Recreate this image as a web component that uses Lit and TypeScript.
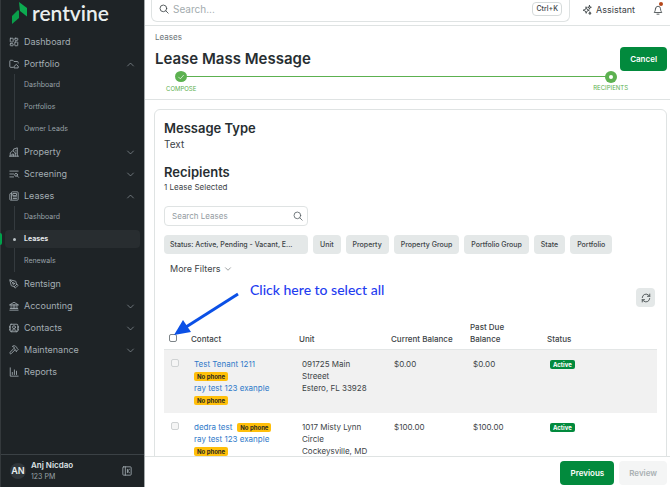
import { LitElement, html, svg, css, nothing } from "lit";
import { customElement, property } from "lit/decorators.js";
import { classMap } from "lit/directives/class-map.js";

const icons = {
  dashboard: svg`<rect x="3" y="3" width="7" height="9" rx="1"/><rect x="14" y="3" width="7" height="5" rx="1"/><rect x="14" y="12" width="7" height="9" rx="1"/><rect x="3" y="16" width="7" height="5" rx="1"/>`,
  folder: svg`<path d="M10 20H4a2 2 0 0 1-2-2V5a2 2 0 0 1 2-2h5l3 3h8a2 2 0 0 1 2 2v2"/><path d="M13 17l4.500-4 4.500 4v4.500h-9z"/>`,
  property: svg`<path d="M1 22h22M3 22v-8l6-5 6 5v8M7 22v-5h4v5M11 8V5l9-3v20M16 8h1M16 12h1M16 16h1"/>`,
  screening: svg`<path d="M2 5h20M2 12h9M2 19h9"/><circle cx="17" cy="14" r="3.500"/><path d="M19.500 16.500L23 20"/>`,
  leases: svg`<path d="M6 6V4a2 2 0 0 1 2-2h12a2 2 0 0 1 2 2v16a2 2 0 0 1-2 2H4a2 2 0 0 1-2-2V8a2 2 0 0 1 2-2h2v14"/><rect x="10" y="6" width="8" height="5"/><path d="M10 14h8M10 18h8"/>`,
  pen: svg`<path d="M15.700 21.300a1 1 0 0 1-1.400 0l-1.600-1.600a1 1 0 0 1 0-1.400l5.600-5.600a1 1 0 0 1 1.400 0l1.600 1.600a1 1 0 0 1 0 1.400z"/><path d="M18 13l-1.400-6.900a1 1 0 0 0-.7-.7L3.200 2a1 1 0 0 0-1.200 1.200l3.500 12.700a1 1 0 0 0 .7.7L13 18M2.300 2.300l7.300 7.300"/><circle cx="11" cy="11" r="2"/>`,
  bank: svg`<path d="M2 9l10-6 10 6zM5 9v9M10 9v9M14 9v9M19 9v9M3 18h18M2 22h20"/>`,
  contacts: svg`<rect x="3" y="3" width="18" height="18" rx="2"/><circle cx="12" cy="10" r="3.500"/><path d="M6.500 21v-1.500a3 3 0 0 1 3-3h5a3 3 0 0 1 3 3V21M1.500 8v3M1.500 14v3M22.500 8v3M22.500 14v3"/>`,
  hammer: svg`<path d="M14 12l-8.500 8.500a2.100 2.100 0 0 1-3-3L11 9M17.600 15L22 10.600l-2.500-2.500V6.500L15.500 3C13 1 9.500 1.500 8 3.500l5 2.500v2.500L17.600 15z"/>`,
  chart: svg`<path d="M3 2v20h19M8 18v-5M13 18V7M18 18v-8"/>`,
  down: svg`<path d="M2 7l10 10L22 7"/>`,
  up: svg`<path d="M2 17L12 7l10 10"/>`,
  search: svg`<circle cx="10.500" cy="10.500" r="8"/><path d="M16.500 16.500L22 22"/>`,
  panel: svg`<rect x="2" y="2" width="20" height="20" rx="2"/><path d="M8 2v20M18 8l-5 4 5 4M13 8v8"/>`,
  sparkle: svg`<path d="M10 5l2 5.500 5.500 2-5.500 2L10 20l-2-5.500-5.500-2 5.500-2zM18 1l1 3.500 3.500 1-3.500 1L18 10l-1-3.500-3.500-1 3.500-1zM19 17l.7 2.300 2.300.7-2.300.7L19 23l-.7-2.300L16 20l2.300-.7z"/>`,
  bell: svg`<path d="M6 9a6 6 0 0 1 12 0c0 6 3 7.500 3 9H3c0-1.500 3-3 3-9M9.500 22h5"/>`,
  check: svg`<path d="M5 12.500l5 5L19.500 7"/>`,
  refresh: svg`<path d="M3 11a9 9 0 0 1 15.500-5.500L21 8M21 2.500V8h-5.500M21 13a9 9 0 0 1-15.500 5.500L3 16M3 21.500V16h5.500"/>`,
};
type IconName = keyof typeof icons;

@customElement("rv-icon")
class RvIcon extends LitElement {
  @property() name: IconName = "search";
  static styles = css`
    :host { display: inline-flex; width: 10px; height: 10px; flex: none; }
    .glyph { width: 100%; height: 100%; fill: none; stroke: currentColor; stroke-width: 2; stroke-linecap: round; stroke-linejoin: round; overflow: visible; }
  `;
  render() {
    return html`<svg class="glyph" viewBox="0 0 24 24" aria-hidden="true">${icons[this.name]}</svg>`;
  }
}

interface NavItem { label: string; icon: IconName; expandable?: boolean; children?: string[]; }

const NAV: NavItem[] = [
  { label: "Dashboard", icon: "dashboard" },
  { label: "Portfolio", icon: "folder", expandable: true, children: ["Dashboard", "Portfolios", "Owner Leads"] },
  { label: "Property", icon: "property", expandable: true },
  { label: "Screening", icon: "screening", expandable: true },
  { label: "Leases", icon: "leases", expandable: true, children: ["Dashboard", "Leases", "Renewals"] },
  { label: "Rentsign", icon: "pen" },
  { label: "Accounting", icon: "bank", expandable: true },
  { label: "Contacts", icon: "contacts", expandable: true },
  { label: "Maintenance", icon: "hammer", expandable: true },
  { label: "Reports", icon: "chart" },
];

@customElement("rv-sidebar")
class RvSidebar extends LitElement {
  static styles = css`
    :host { display: flex; flex-direction: column; box-sizing: border-box; background: #1e2326; color: #a3adb3; border-left: 1px solid #34393c; }
    a, button { font: inherit; color: inherit; text-decoration: none; background: none; border: 0; padding: 0; text-align: left; }
    .brand { display: flex; align-items: center; gap: 5px; height: 25px; padding-left: 10px; color: #e9eeee; font: 600 21px/25px Lato, sans-serif; }
    .mark { width: 16px; height: 24px; flex: none; }
    .nav { flex: 1; padding-top: 6px; }
    .list { list-style: none; margin: 0; padding: 0; }
    .row { display: flex; align-items: center; box-sizing: border-box; width: 100%; height: 22px; padding: 0 10px 0 8px; gap: 5px; font-size: 9px; }
    .label { flex: 1; }
    .chevron { width: 7px; height: 7px; }
    .sub { position: relative; margin: -1px 0 1px; }
    .sub::before { content: ""; position: absolute; left: 13px; top: 0; bottom: 0; width: 1px; background: #343a3e; }
    .leaf { position: relative; display: flex; align-items: center; height: 22px; padding-left: 23px; font-size: 7px; color: #98a2a8; }
    .current { color: #e3e8ea; font-weight: 700; }
    .current::before { content: ""; position: absolute; inset: 2px 4px; border-radius: 4px; background: #282d30; }
    .current::after { content: ""; position: absolute; left: -1px; top: 5px; width: 2px; height: 12px; border-radius: 0 2px 2px 0; background: #00a14b; }
    .dot { position: absolute; z-index: 1; left: 12px; top: 10px; width: 3px; height: 3px; border-radius: 50%; background: #b9c1c5; }
    .text { position: relative; }
    .user { display: flex; align-items: center; gap: 5px; border-top: 1px solid #3b4145; height: 32px; padding: 0 12px 0 9px; }
    .avatar { display: grid; place-items: center; width: 16px; height: 16px; border-radius: 50%; background: #30363a; color: #e9eeee; font-size: 9px; font-weight: 600; }
    .who { flex: 1; font-size: 8px; line-height: 11px; font-weight: 600; color: #dfe4e6; }
    .org { display: block; font-size: 7px; font-weight: 400; color: #9aa4a9; }
    .collapse { display: flex; }
  `;
  render() {
    return html`
      <div class="brand">
        <svg class="mark" viewBox="0 0 16 24" aria-hidden="true">
          <path fill="#0cab50" d="M8 1l8 6v8.500l-7-5.500z" /><path fill="#0a9e4a" d="M1 15l6-6 1 1v7l-7 6z" />
        </svg>rentvine
      </div>
      <nav class="nav" aria-label="Main"><ul class="list">
        ${NAV.map((item) => html`<li>
          ${item.expandable
            ? html`<button class="row" aria-expanded=${item.children ? "true" : "false"}><rv-icon name=${item.icon}></rv-icon><span class="label">${item.label}</span><rv-icon class="chevron" name=${item.children ? "up" : "down"}></rv-icon></button>`
            : html`<a class="row" href="#"><rv-icon name=${item.icon}></rv-icon><span class="label">${item.label}</span></a>`}
          ${item.children ? html`<ul class="list sub">${item.children.map((child) => {
            const current = child === item.label;
            return html`<li><a href="#" class=${classMap({ leaf: true, current })} aria-current=${current ? "page" : nothing}>${current ? html`<span class="dot"></span>` : nothing}<span class="text">${child}</span></a></li>`;
          })}</ul>` : nothing}
        </li>`)}
      </ul></nav>
      <div class="user">
        <span class="avatar">AN</span>
        <span class="who">Anj Nicdao<span class="org">123 PM</span></span>
        <button class="collapse" aria-label="Collapse sidebar"><rv-icon name="panel"></rv-icon></button>
      </div>`;
  }
}

interface Contact { name: string; inline?: boolean; }
interface Lease { contacts: Contact[]; address: string[]; current: string; pastDue: string; status: string; }

const FILTERS = ["Unit", "Property", "Property Group", "Portfolio Group", "State", "Portfolio"];
const LEASES: Lease[] = [
  { contacts: [{ name: "Test Tenant 1211" }, { name: "ray test 123 exanple" }], address: ["091725 Main", "Streeet", "Estero, FL 33928"], current: "$0.00", pastDue: "$0.00", status: "Active" },
  { contacts: [{ name: "dedra test", inline: true }, { name: "ray test 123 exanple" }], address: ["1017 Misty Lynn", "Circle", "Cockeysville, MD"], current: "$100.00", pastDue: "$100.00", status: "Active" },
];

@customElement("rv-recipients")
class RvRecipients extends LitElement {
  static styles = css`
    :host { display: block; position: relative; box-sizing: border-box; border: 1px solid #dfe3e3; border-radius: 6px; padding: 9px; color: #3c4346; font-size: 8px; }
    h2 { margin: 0; font-size: 13px; line-height: 18px; font-weight: 600; color: #272e31; }
    p { margin: 0; }
    button, input { font: inherit; color: inherit; }
    .type { font-size: 10px; line-height: 14px; margin-bottom: 12px; }
    .count { line-height: 12px; margin-bottom: 13px; }
    .search { display: flex; align-items: center; box-sizing: border-box; width: 144px; height: 20px; padding: 0 4px 0 7px; border: 1px solid #dfe3e3; border-radius: 4px; color: #596266; }
    .field { flex: 1; min-width: 0; border: 0; padding: 0; outline: 0; background: none; }
    .field::placeholder { color: #939b9f; opacity: 1; }
    .chips { display: flex; flex-wrap: wrap; gap: 5px; margin-top: 9px; }
    .chip { height: 19px; border: 0; border-radius: 4px; padding: 0 7px; background: #e4e8e8; font-size: 7px; font-weight: 500; white-space: nowrap; }
    .wide { width: 144px; padding: 0 6px; text-align: left; }
    .more { display: flex; align-items: center; gap: 4px; height: 18px; margin-top: 6px; padding: 0 6px; border: 0; background: none; font-size: 9px; }
    .chevron { width: 6px; height: 6px; }
    .tools { display: flex; justify-content: flex-end; padding: 10px 2px 14px; }
    .refresh { display: grid; place-items: center; width: 19px; height: 19px; padding: 0; border: 0; border-radius: 4px; background: #e4e8e8; }
    table { width: 100%; table-layout: fixed; border-collapse: collapse; line-height: 12px; }
    th, td { box-sizing: border-box; text-align: left; }
    th { padding: 0 14px 4px 0; vertical-align: bottom; font-weight: 500; }
    td { padding: 8px 0 6px 3px; vertical-align: top; }
    tr { border-bottom: 1px solid #e3e6e6; }
    tbody tr { border-color: #f1f1f1; }
    tbody tr:nth-child(odd) { background: #f1f1f1; }
    .c-check { width: 27px; padding-right: 0; } .c-contact { width: 108px; } .c-unit { width: 92px; } .c-current { width: 79px; } .c-due { width: 77px; }
    .box { appearance: none; display: block; box-sizing: border-box; width: 8px; height: 8px; margin: 2px 0 3px 5px; border: 1px solid #7d8488; border-radius: 2px; background: #fff; }
    .box:disabled { border-color: #cfd2d3; background: #f5f5f5; margin: 1px 0 0 4px; }
    .line { display: block; }
    .name { color: #2f7ac9; text-decoration: none; }
    .tag { display: inline-block; height: 9px; padding: 0 3px; border-radius: 2px; background: #ffbf0a; color: #2b2a20; font-size: 6px; line-height: 9px; font-weight: 700; vertical-align: middle; white-space: nowrap; }
    .ok { background: #028a3d; color: #fff; }
    .spaced { margin-left: 5px; }
    .note { position: absolute; left: 95px; top: 171px; margin: 0; font: 500 14px/18px Lato, sans-serif; color: #1f3df0; white-space: nowrap; }
    .arrow { position: absolute; left: 18px; top: 180px; width: 68px; height: 48px; pointer-events: none; }
  `;
  private tag(text: string, spaced = false) {
    return html`<span class=${classMap({ tag: true, spaced })}>${text}</span>`;
  }
  render() {
    return html`
      <h2>Message Type</h2><p class="type">Text</p>
      <h2>Recipients</h2><p class="count">1 Lease Selected</p>
      <label class="search"><input class="field" type="text" placeholder="Search Leases" aria-label="Search Leases" /><rv-icon name="search"></rv-icon></label>
      <div class="chips">
        <button class="chip wide">Status: Active, Pending - Vacant, E...</button>
        ${FILTERS.map((f) => html`<button class="chip">${f}</button>`)}
      </div>
      <button class="more">More Filters <rv-icon class="chevron" name="down"></rv-icon></button>
      <div class="tools"><button class="refresh" aria-label="Refresh"><rv-icon name="refresh"></rv-icon></button></div>
      <table>
        <thead><tr>
          <th class="c-check"><input class="box" type="checkbox" aria-label="Select all" /></th>
          <th class="c-contact">Contact</th><th class="c-unit">Unit</th><th class="c-current">Current Balance</th>
          <th class="c-due">Past Due Balance</th><th>Status</th>
        </tr></thead>
        <tbody>${LEASES.map((l) => html`<tr>
          <td><input class="box" type="checkbox" disabled aria-label="Select lease" /></td>
          <td>${l.contacts.map((c) => html`<span class="line"><a class="name" href="#">${c.name}</a>${c.inline ? this.tag("No phone", true) : nothing}</span>
            ${c.inline ? nothing : html`<span class="line">${this.tag("No phone")}</span>`}`)}</td>
          <td>${l.address.map((a) => html`<span class="line">${a}</span>`)}</td>
          <td>${l.current}</td><td>${l.pastDue}</td><td><span class="tag ok">${l.status}</span></td>
        </tr>`)}</tbody>
      </table>
      <p class="note">Click here to select all</p>
      <svg class="arrow" viewBox="0 0 68 48" aria-hidden="true"><path d="M65 4L13 37" stroke="#0b50e6" stroke-width="3" /><path d="M1 45l9-15 8 12z" fill="#0b50e6" /></svg>`;
  }
}

@customElement("app-root")
class AppRoot extends LitElement {
  static styles = css`
    :host { display: grid; grid-template-columns: 144px minmax(0, 1fr); height: 100vh; overflow: hidden; font-family: Inter, "Liberation Sans", sans-serif; font-size: 9px; line-height: 12px; color: #3c4346; background: #fff; }
    button, input { font: inherit; color: inherit; }
    .main { display: flex; flex-direction: column; min-width: 0; min-height: 0; border-left: 1px solid #a4a9ab; }
    .top { display: flex; align-items: flex-start; height: 25px; flex: none; padding: 0 7px 0 6px; border-bottom: 1px solid #dfe3e3; }
    .search { flex: 1; display: flex; align-items: center; gap: 4px; box-sizing: border-box; height: 22px; padding: 0 7px 3px 7px; border: 1px solid #dfe3e3; border-top: 0; border-radius: 0 0 6px 6px; margin-right: 12px; font-size: 10px; }
    .field { flex: 1; min-width: 0; border: 0; padding: 0; outline: 0; background: none; }
    .field::placeholder { color: #a3abae; opacity: 1; }
    kbd { font: 500 7px/12px Inter, sans-serif; border: 1px solid #d5dada; border-radius: 4px; padding: 0 3px; }
    .tool { position: relative; display: flex; align-items: center; gap: 4px; height: 19px; padding: 0; border: 0; background: none; }
    .bell { margin-left: 18px; }
    .alert { position: absolute; right: 0; top: 2px; width: 4px; height: 4px; border-radius: 50%; background: #b5471b; }
    .head { flex: none; padding: 5px 3px 6px 10px; border-bottom: 1px solid #dfe3e3; }
    .crumb { display: block; font-size: 8px; color: #697276; text-decoration: none; margin-bottom: 4px; }
    .title { display: flex; align-items: center; justify-content: space-between; }
    h1 { margin: 0; font-size: 15px; line-height: 24px; font-weight: 600; color: #272e31; }
    .btn { height: 24px; border: 0; border-radius: 4px; padding: 0 10px; background: #028a3d; color: #fff; font-size: 8px; font-weight: 600; }
    .btn:disabled { background: #f4f5f5; color: #a9b0b3; }
    .steps { position: relative; display: flex; justify-content: space-between; list-style: none; margin: 0 39px 0 11px; padding: 0; color: #5cb150; font-size: 6px; line-height: 8px; height: 22px; }
    .steps::before { content: ""; position: absolute; left: 15px; right: 17px; top: 5px; height: 1px; background: #5cb150; }
    .step { position: relative; display: flex; flex-direction: column; align-items: center; gap: 1px; }
    .done { gap: 3px; }
    .dot { display: grid; place-items: center; width: 12px; height: 12px; border-radius: 50%; background: #5cb150; color: #fff; }
    .tick { width: 8px; height: 8px; }
    .hole { width: 4px; height: 4px; border-radius: 50%; background: #fff; }
    .scroll { flex: 1; min-height: 0; overflow-y: auto; scrollbar-width: none; padding: 9px 3px 9px 9px; }
    .actions { flex: none; display: flex; justify-content: flex-end; gap: 5px; padding: 4px 3px 2px; border-top: 1px solid #dfe3e3; }
  `;
  render() {
    return html`
      <rv-sidebar></rv-sidebar>
      <main class="main">
        <div class="top">
          <label class="search"><rv-icon name="search"></rv-icon><input class="field" type="text" placeholder="Search..." aria-label="Search" /><kbd>Ctrl+K</kbd></label>
          <button class="tool"><rv-icon name="sparkle"></rv-icon>Assistant</button>
          <button class="tool bell" aria-label="Notifications"><rv-icon name="bell"></rv-icon><span class="alert"></span></button>
        </div>
        <header class="head">
          <a class="crumb" href="#">Leases</a>
          <div class="title"><h1>Lease Mass Message</h1><button class="btn">Cancel</button></div>
          <ol class="steps">
            <li class="step done"><span class="dot"><rv-icon class="tick" name="check"></rv-icon></span>COMPOSE</li>
            <li class="step" aria-current="step"><span class="dot"><span class="hole"></span></span>RECIPIENTS</li>
          </ol>
        </header>
        <div class="scroll"><rv-recipients></rv-recipients></div>
        <footer class="actions"><button class="btn">Previous</button><button class="btn" disabled>Review</button></footer>
      </main>`;
  }
}
